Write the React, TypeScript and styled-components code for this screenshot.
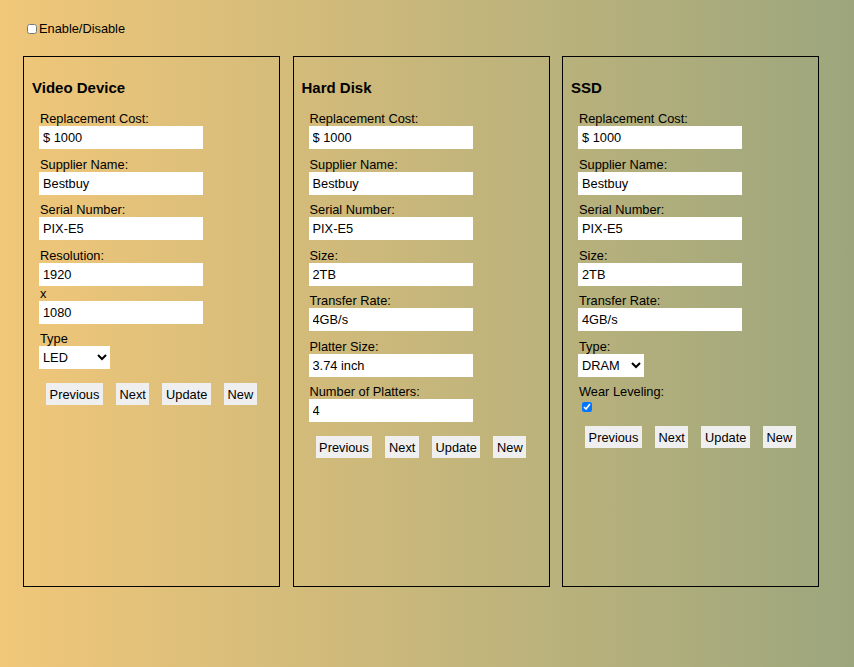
import React from "react";
import styled, { createGlobalStyle } from "styled-components";

const GlobalStyle = createGlobalStyle`
  html, body {
    margin: 0;
    padding: 0;
    min-height: 100%;
  }
  body {
    min-height: 100vh;
    background: linear-gradient(to right, #f1c779, #9ca67d);
    font-family: "Liberation Sans", Arial, sans-serif;
    font-size: 12.8px;
    color: #000;
  }
`;

const Page = styled.div`
  padding: 21px 0 0 23px;
`;

const EnableRow = styled.label`
  display: flex;
  align-items: center;
  height: 15px;
  line-height: 15px;
`;

const SmallCheck = styled.input.attrs({ type: "checkbox" })<{ $block?: boolean }>`
  width: 10px;
  height: 10px;
  margin: ${(p) => (p.$block ? "3px 0 0 4px" : "0 2px 0 4px")};
  display: ${(p) => (p.$block ? "block" : "inline-block")};
`;

const PanelRow = styled.div`
  display: flex;
  gap: 12.5px;
  margin-top: 20px;
`;

const Panel = styled.section`
  box-sizing: border-box;
  width: 257px;
  height: 531px;
  border: 1px solid #000;
  padding: 8px;
`;

const Title = styled.h3`
  margin: 14px 0 15px;
  font-size: 15px;
  line-height: 17px;
  font-weight: bold;
`;

const Fields = styled.div`
  display: flex;
  flex-direction: column;
  gap: 7.5px;
  padding-left: 7px;
`;

const Field = styled.div`
  display: flex;
  flex-direction: column;
  align-items: flex-start;
`;

const Label = styled.span`
  display: block;
  line-height: 15.25px;
  padding-left: 1px;
`;

const TextInput = styled.input`
  box-sizing: border-box;
  width: 164px;
  height: 22.75px;
  border: none;
  outline: none;
  padding: 0 4px;
  margin: 0;
  background: #fff;
  font-family: "Liberation Sans", Arial, sans-serif;
  font-size: 12.8px;
  color: #000;
`;

const Select = styled.select<{ $w: number }>`
  box-sizing: border-box;
  width: ${(p) => p.$w}px;
  height: 22.75px;
  border: none;
  outline: none;
  margin: 0;
  background: #fff;
  font-family: "Liberation Sans", Arial, sans-serif;
  font-size: 12.8px;
  color: #000;
`;

const ButtonRow = styled.div`
  display: flex;
  gap: 13px;
  padding-left: 14px;
  margin-top: 14px;
`;

const Button = styled.button`
  height: 22px;
  border: none;
  background: #efefef;
  padding: 0 3.6px;
  margin: 0;
  font-family: "Liberation Sans", Arial, sans-serif;
  font-size: 12.8px;
  color: #000;
`;

const TextField = ({ label, value }: { label: string; value: string }) => (
  <Field>
    <Label>{label}</Label>
    <TextInput defaultValue={value} />
  </Field>
);

const Buttons = () => (
  <ButtonRow>
    <Button>Previous</Button>
    <Button>Next</Button>
    <Button>Update</Button>
    <Button>New</Button>
  </ButtonRow>
);

const Common = () => (
  <>
    <TextField label="Replacement Cost:" value="$ 1000" />
    <TextField label="Supplier Name:" value="Bestbuy" />
    <TextField label="Serial Number:" value="PIX-E5" />
  </>
);

export default function App() {
  return (
    <>
      <GlobalStyle />
      <Page>
        <EnableRow>
          <SmallCheck />
          Enable/Disable
        </EnableRow>
        <PanelRow>
          <Panel>
            <Title>Video Device</Title>
            <Fields>
              <Common />
              <Field>
                <Label>Resolution:</Label>
                <TextInput defaultValue="1920" />
                <Label>x</Label>
                <TextInput defaultValue="1080" />
              </Field>
              <Field>
                <Label>Type</Label>
                <Select $w={71} defaultValue="LED">
                  <option>LED</option>
                  <option>LCD</option>
                  <option>OLED</option>
                </Select>
              </Field>
            </Fields>
            <Buttons />
          </Panel>
          <Panel>
            <Title>Hard Disk</Title>
            <Fields>
              <Common />
              <TextField label="Size:" value="2TB" />
              <TextField label="Transfer Rate:" value="4GB/s" />
              <TextField label="Platter Size:" value="3.74 inch" />
              <TextField label="Number of Platters:" value="4" />
            </Fields>
            <Buttons />
          </Panel>
          <Panel>
            <Title>SSD</Title>
            <Fields>
              <Common />
              <TextField label="Size:" value="2TB" />
              <TextField label="Transfer Rate:" value="4GB/s" />
              <Field>
                <Label>Type:</Label>
                <Select $w={66} defaultValue="DRAM">
                  <option>DRAM</option>
                  <option>SLC</option>
                  <option>MLC</option>
                </Select>
              </Field>
              <Field>
                <Label>Wear Leveling:</Label>
                <SmallCheck $block defaultChecked />
              </Field>
            </Fields>
            <Buttons />
          </Panel>
        </PanelRow>
      </Page>
    </>
  );
}
